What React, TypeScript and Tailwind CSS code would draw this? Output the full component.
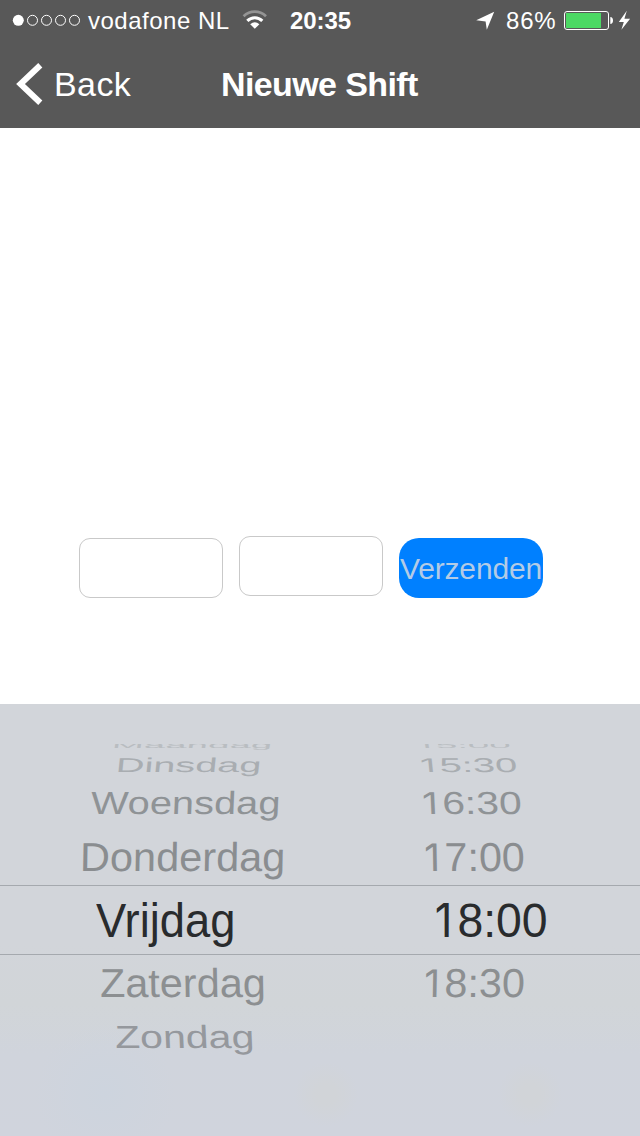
type PickerRow = {
  row: string;
  day: string;
  dayClass: string;
  time?: string;
  timeClass?: string;
};

const rows: PickerRow[] = [
  {
    row: "-mt-1 h-[11px] text-[#b9bdc1]",
    day: "Maandag",
    dayClass: "ml-[112px] scale-x-[0.785] scale-y-[0.17] -skew-x-2",
    time: "15:00",
    timeClass: "ml-[413px] scale-x-[0.785] scale-y-[0.17] skew-x-2",
  },
  {
    row: "-mt-px h-[30px] text-[#a9adb1]",
    day: "Dinsdag",
    dayClass: "ml-[116px] scale-x-[0.81] scale-y-[0.407] -skew-x-3",
    time: "15:30",
    timeClass: "ml-[416px] scale-x-[0.813] scale-y-[0.407] skew-x-3",
  },
  {
    row: "h-[47px] text-[#8f9396]",
    day: "Woensdag",
    dayClass: "ml-[91px] scale-x-[0.812] scale-y-[0.653] -skew-x-2",
    time: "16:30",
    timeClass: "ml-[418px] scale-x-[0.833] scale-y-[0.653] skew-x-2",
  },
  {
    row: "mt-[3px] h-[55px] text-[#8a8d90]",
    day: "Donderdag",
    dayClass: "ml-[80px] scale-x-[0.847] scale-y-[0.825] -skew-x-1",
    time: "17:00",
    timeClass: "ml-[420px] scale-x-[0.843] scale-y-[0.825] skew-x-1",
  },
  {
    row: "h-[70px] border-y border-[#a5a9ae] text-[#292b2d]",
    day: "Vrijdag",
    dayClass: "ml-[96px] scale-x-[0.925]",
    time: "18:00",
    timeClass: "ml-[430px] scale-x-[0.946]",
  },
  {
    row: "h-[56px] text-[#8c8f91]",
    day: "Zaterdag",
    dayClass: "ml-[100px] scale-x-[0.845] scale-y-[0.825] skew-x-1",
    time: "18:30",
    timeClass: "ml-[420px] scale-x-[0.843] scale-y-[0.825] -skew-x-1",
  },
  {
    row: "h-[52px] text-[#95989d]",
    day: "Zondag",
    dayClass: "ml-[115px] scale-x-[0.838] scale-y-[0.653] skew-x-2",
  },
];

function StatusBar() {
  return (
    <div className="flex h-10 items-center text-[24px] leading-none">
      <svg className="ml-3 shrink-0" width="70" height="14" viewBox="0 0 70 14" fill="none" stroke="#fff">
        <circle cx="6.3" cy="7.3" r="5.5" fill="#fff" stroke="none" />
        <circle cx="20.5" cy="7.3" r="5" />
        <circle cx="34.5" cy="7.3" r="5" />
        <circle cx="48.5" cy="7.3" r="5" />
        <circle cx="62.5" cy="7.3" r="5" />
      </svg>
      <span className="ml-[6px] w-[142px] whitespace-nowrap pt-[2px] tracking-[0.5px]">vodafone NL</span>
      <svg className="ml-[12px] shrink-0" width="26" height="20" viewBox="0 0 26 20" fill="none">
        <path d="M1.6 6.2C8 .2 17.5.2 24 6.2" stroke="#949494" strokeWidth="2.8" />
        <path d="M5.3 10.9C9.6 6.7 16 6.7 20.3 10.9" stroke="#fff" strokeWidth="3.1" />
        <path d="M8.2 14.2Q12.8 10.2 17.4 14.2L12.8 18.8Z" fill="#fff" />
      </svg>
      <span className="ml-[22px] w-[62px] whitespace-nowrap pt-[2px] font-bold tracking-[-0.1px]">20:35</span>
      <svg className="ml-[123px] shrink-0" width="20" height="20" viewBox="0 0 20 20" fill="#fff">
        <path d="M19.2 1.8L11.8 19.8L10.6 11.6L1.2 10.2Z" />
      </svg>
      <span className="ml-[11px] w-[51px] whitespace-nowrap pt-[2px] tracking-[0.8px]">86%</span>
      <svg className="ml-[6px] shrink-0" width="68" height="22" viewBox="0 0 68 22">
        <rect x="1.5" y="2.5" width="44" height="18" rx="2.5" fill="none" stroke="#fff" />
        <rect x="3" y="4" width="35" height="15" fill="#4cd964" />
        <path d="M47.3 8Q50 8.3 50 11.5T47.3 15Z" fill="#fff" />
        <path d="M63.8 1.8L55.8 13H60.8L58.4 20.8L67.1 9.8H61.4Z" fill="#fff" />
      </svg>
    </div>
  );
}

function NavBar() {
  return (
    <div className="flex h-[88px] items-center text-[34px] leading-none">
      <svg className="ml-4 shrink-0" width="27" height="42" viewBox="0 0 27 42" fill="none">
        <path d="M24.3 2.2L4.5 21L24.3 39.8" stroke="#fff" strokeWidth="6" />
      </svg>
      <span className="ml-[11px] w-[78px] whitespace-nowrap tracking-[0.4px]">Back</span>
      <h1 className="ml-[89px] whitespace-nowrap font-bold tracking-[-0.6px]">Nieuwe Shift</h1>
    </div>
  );
}

function WheelTime({ time, className }: { time: string; className: string }) {
  return (
    <span className={`origin-left whitespace-nowrap text-[49px] leading-none ${className}`}>
      <span className="inline-block w-[29px] text-center font-['Inter',sans-serif] text-[46px] leading-none">
        {time[0]}
      </span>
      {time.slice(1)}
    </span>
  );
}

export default function App() {
  return (
    <div className="flex h-[1136px] w-[640px] flex-col overflow-hidden bg-white font-['Liberation_Sans',Arial,sans-serif]">
      <header className="h-32 shrink-0 bg-[#585858] text-white">
        <StatusBar />
        <NavBar />
      </header>
      <main className="flex h-[576px] shrink-0 items-start gap-4 pt-[408px] pl-[79px]">
        <input aria-label="Dag" className="mt-[2px] h-[60px] w-36 rounded-[11px] border border-[#c9c9c9] bg-white" />
        <input aria-label="Tijd" className="h-[60px] w-36 rounded-[11px] border border-[#c9c9c9] bg-white" />
        <button className="mt-[2px] flex h-[60px] w-36 items-center justify-center whitespace-nowrap rounded-[20px] bg-[#0080ff] pt-[2px] text-[30px] leading-none tracking-[-0.15px] text-[#b3cbe6]">
          Verzenden
        </button>
      </main>
      <section className="h-[432px] bg-[radial-gradient(circle_at_105px_390px,#cdd4de_0px,#cdd4de00_70px),radial-gradient(circle_at_326px_390px,#d1d4d8_10px,#d1d4d800_32px),radial-gradient(circle_at_530px_390px,#d1d4d8_10px,#d1d4d800_32px),linear-gradient(to_bottom,#d2d5da_0px,#d2d5da_240px,#d1d5d8_300px,#d0d4dc_350px,#d0d4dd_432px)] pt-10">
        <div className="overflow-hidden">
          {rows.map((item) => (
            <div key={item.day} className={`flex items-center ${item.row}`}>
              <div className="flex h-0 w-0 items-center">
                <span className={`origin-left whitespace-nowrap text-[49px] leading-none ${item.dayClass}`}>
                  {item.day}
                </span>
              </div>
              {item.time && (
                <div className="flex h-0 w-0 items-center">
                  <WheelTime time={item.time} className={item.timeClass ?? ""} />
                </div>
              )}
            </div>
          ))}
        </div>
      </section>
    </div>
  );
}
